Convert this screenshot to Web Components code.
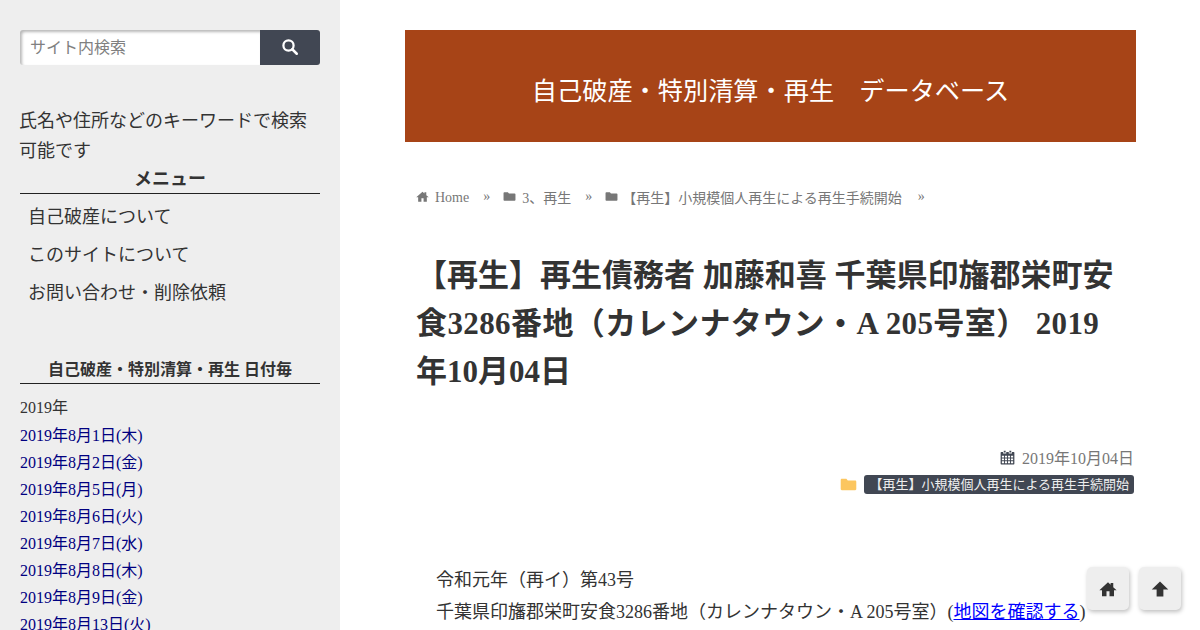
<!DOCTYPE html>
<html lang="ja">
<head>
<meta charset="utf-8">
<title>自己破産・特別清算・再生 データベース</title>
<style>
html, body { margin: 0; height: 630px; overflow: hidden; background: #fff; }
body { font-family: "Liberation Serif", "Noto Sans CJK JP", serif; color: #333; }
.wide { letter-spacing: .4px; }
</style>
</head>
<body>
<site-page>
  <site-sidebar slot="side">
    <search-box></search-box>
    <p class="note" style="margin:41px 0 0 -1px;font-size:18px;line-height:30px;color:#333">氏名や住所などのキーワードで検索可能です</p>
    <side-heading size="18">メニュー</side-heading>
    <side-menu>
      <menu-item>自己破産について</menu-item>
      <menu-item>このサイトについて</menu-item>
      <menu-item>お問い合わせ・削除依頼</menu-item>
    </side-menu>
    <side-heading size="16" style="margin-top:46px">自己破産・特別清算・再生 日付毎</side-heading>
    <date-list>
      <date-row plain>2019年</date-row>
      <date-row>2019年8月1日(木)</date-row>
      <date-row>2019年8月2日(金)</date-row>
      <date-row>2019年8月5日(月)</date-row>
      <date-row>2019年8月6日(火)</date-row>
      <date-row>2019年8月7日(水)</date-row>
      <date-row>2019年8月8日(木)</date-row>
      <date-row>2019年8月9日(金)</date-row>
      <date-row>2019年8月13日(火)</date-row>
    </date-list>
  </site-sidebar>
  <site-main slot="main">
    <site-banner>自己破産・特別清算・再生　データベース</site-banner>
    <bread-crumb></bread-crumb>
    <post-title>
      <div>【再生】再生債務者 加藤和喜 千葉県印旛郡栄町安</div>
      <div class="wide">食3286番地（カレンナタウン・A 205号室） 2019</div>
      <div>年10月04日</div>
    </post-title>
    <post-meta></post-meta>
    <post-body>
      <div>令和元年（再イ）第43号</div>
      <div>千葉県印旛郡栄町安食3286番地（カレンナタウン・A 205号室）(<a href="#" style="color:#00f">地図を確認する</a>)</div>
    </post-body>
  </site-main>
</site-page>
<float-buttons></float-buttons>

<script>
// 共通アイコン
const ICONS = {
  search: '<circle cx="10" cy="10" r="6.800" fill="none" stroke="currentColor" stroke-width="3"/><path d="M15 15l6 6" stroke="currentColor" stroke-width="3.400" stroke-linecap="round"/>',
  home: '<path fill="currentColor" d="M12 3 .5 13.500h3.500v8h6v-6.500h4v6.500h6v-8h3.500L19 9.500V4h-3.500v2.300z"/>',
  folder: '<path fill="currentColor" d="M2.500 4h6.500l2 2.500h10.500c.8 0 1.500.7 1.500 1.500v10.500c0 .8-.7 1.500-1.500 1.500h-19C1.700 20 1 19.300 1 18.500v-13C1 4.700 1.700 4 2.500 4z"/>',
  calendar: '<path fill="currentColor" fill-rule="evenodd" d="M6 1h3v3H6zM15 1h3v3h-3zM2 3h3v2.500h5V3h4v2.500h5V3h3c.6 0 1 .4 1 1v18c0 .6-.4 1-1 1H2c-.6 0-1-.4-1-1V4c0-.6.4-1 1-1zM3 9v3h3.500V9zm5 0v3h3.300V9zm4.800 0v3H16V9zm4.700 0v3H21V9zM3 13.500v3h3.500v-3zm5 0v3h3.300v-3zm4.800 0v3H16v-3zm4.700 0v3H21v-3zM3 18v3h3.500v-3zm5 0v3h3.300v-3zm4.800 0v3H16v-3zm4.700 0v3H21v-3z"/>',
  arrow: '<path fill="currentColor" d="M12 2 1 12.500h6.500V22h9v-9.500H23z"/>'
};
const icon = (name, size) => `<svg width="${size}" height="${size}" viewBox="0 0 24 24" aria-hidden="true">${ICONS[name]}</svg>`;

// slotだけを持つ単純な要素をまとめて定義する
function simple(tag, css, html = '<slot></slot>') {
  customElements.define(tag, class extends HTMLElement {
    constructor() {
      super();
      this.attachShadow({ mode: 'open' });
      this.shadowRoot.innerHTML = `<style>${css}</style>${html}`;
    }
  });
}

simple('site-page', `:host { display: flex; height: 630px; }`,
  `<slot name="side"></slot><slot name="main"></slot>`);
simple('site-sidebar', `:host { display: block; box-sizing: border-box; width: 340px; height: 630px; flex: none; padding: 30px 20px 0; background: #eee; overflow: hidden; }`);
simple('site-main', `:host { display: block; flex: none; width: 731px; margin-left: 65px; padding-top: 30px; }`);

simple('search-box', `
  :host { display: flex; height: 35px; }
  .field { box-sizing: border-box; width: 240px; padding-left: 10px; background: #fff; color: #808080; font-size: 16px; line-height: 35px;
    box-shadow: inset 2px 2px 3px rgba(0,0,0,.28); border-radius: 3px 0 0 3px; }
  .btn { display: flex; align-items: center; justify-content: center; width: 60px; padding-bottom: 2px; box-sizing: border-box; background: #414753; color: #fff; border-radius: 0 3px 3px 0; }
`, `<div class="field">サイト内検索</div><div class="btn">${icon('search', 18)}</div>`);

customElements.define('side-heading', class extends HTMLElement {
  constructor() {
    super();
    this.attachShadow({ mode: 'open' });
    const size = this.getAttribute('size');
    this.shadowRoot.innerHTML = `<style>
      :host { display: block; text-align: center; font-weight: bold; font-size: ${size}px; line-height: ${size == 18 ? 26 : 24}px; padding-bottom: 1px; border-bottom: 1px solid #222; color: #333; }
    </style><slot></slot>`;
  }
});

simple('side-menu', `:host { display: block; padding: 4px 0 0 8px; }`);
simple('menu-item', `:host { display: block; font-size: 18px; line-height: 38px; color: #333; }`);
simple('date-list', `:host { display: block; padding-top: 10px; }`);
simple('date-row', `:host { display: block; font-size: 16px; line-height: 27px; color: #000080; white-space: nowrap; } :host([plain]) { color: #333; line-height: 28px; }`);

simple('site-banner', `:host { display: block; height: 112px; line-height: 124px; text-align: center; background: #a74417; color: #fff; font-size: 25.2px; }`);

simple('bread-crumb', `
  :host { display: flex; align-items: center; height: 20px; margin: 45px 0 0 11px; font-size: 14px; color: #777; white-space: nowrap; }
  svg { flex: none; margin: 0 6px 2px 0; }
  .home { padding-top: 1px; }
  .sep { margin: 0 13px 0 14px; }
  .sep.last { margin: 0 0 0 16px; }
`, `${icon('home', 13)}<span class="home">Home</span><span class="sep">»</span>${icon('folder', 13)}<span>3、再生</span><span class="sep">»</span>${icon('folder', 13)}<span style="margin-left:-2px">【再生】小規模個人再生による再生手続開始</span><span class="sep last">»</span>`);

simple('post-title', `:host { display: block; margin: 45px 11px 0; font-size: 31px; line-height: 48px; font-weight: bold; color: #333; white-space: nowrap; }`);

simple('post-meta', `
  :host { display: flex; flex-direction: column; align-items: flex-end; margin: 49px 2px 0 0; color: #777; font-size: 16px; }
  .row { display: flex; align-items: center; height: 24px; }
  .cal { color: #414753; display: flex; margin-right: 7px; }
  .tagrow { margin-top: 3px; }
  .folder { color: #fcc65f; display: flex; margin-right: 7px; }
  .tag { background: #414753; color: #eee; font-size: 13px; line-height: 19px; padding: 0 5px; border-radius: 3px; }
`, `<div class="row"><span class="cal">${icon('calendar', 15)}</span>2019年10月04日</div>
    <div class="row tagrow"><span class="folder">${icon('folder', 17)}</span><span class="tag">【再生】小規模個人再生による再生手続開始</span></div>`);

simple('post-body', `:host { display: block; margin: 68px 0 0 31px; font-size: 18px; line-height: 32px; color: #333; white-space: nowrap; }`);

simple('float-buttons', `
  :host { position: fixed; left: 1087px; top: 567px; display: flex; gap: 10px; color: #333; }
  .b { display: flex; align-items: center; justify-content: center; width: 42px; height: 43px; background: #eee; border-radius: 5px; box-shadow: 1px 2px 4px rgba(0,0,0,.25); }
`, `<div class="b">${icon('home', 18)}</div><div class="b">${icon('arrow', 18)}</div>`);
</script>
</body>
</html>
